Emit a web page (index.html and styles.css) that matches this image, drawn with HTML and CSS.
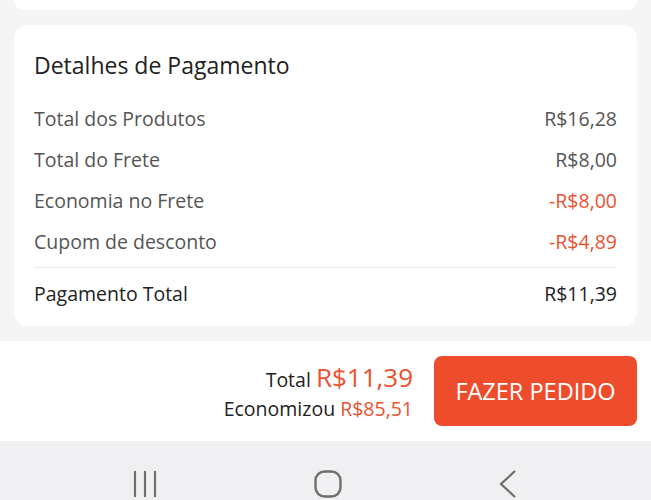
FILE: index.html
```html
<!DOCTYPE html>
<html lang="pt-BR">
<head>
    <meta charset="UTF-8">
    <meta name="viewport" content="width=device-width, initial-scale=1.0">
    <title>Detalhes de Pagamento</title>
    <link rel="stylesheet" href="styles.css">
</head>
<body>
    <div class="page">
        <div class="card card-top"></div>

        <div class="card detalhes">
            <h2>Detalhes de Pagamento</h2>
            <div class="linha"><span>Total dos Produtos</span><span>R$16,28</span></div>
            <div class="linha"><span>Total do Frete</span><span>R$8,00</span></div>
            <div class="linha"><span>Economia no Frete</span><span class="desconto">-R$8,00</span></div>
            <div class="linha"><span>Cupom de desconto</span><span class="desconto">-R$4,89</span></div>
            <div class="linha total"><span>Pagamento Total</span><span>R$11,39</span></div>
        </div>
    </div>

    <div class="rodape">
        <div class="resumo">
            <div class="resumo-total">Total <span class="valor">R$11,39</span></div>
            <div class="resumo-economia">Economizou <span class="laranja">R$85,51</span></div>
        </div>
        <button class="btn-pedido">FAZER PEDIDO</button>
    </div>

    <div class="navbar">
        <svg width="26" height="28" viewBox="0 0 26 28"><path d="M3 1v26M13 1v26M23 1v26" stroke="#6e6e6e" stroke-width="2.2" fill="none"/></svg>
        <svg width="28" height="28" viewBox="0 0 28 28"><rect x="1.5" y="1.5" width="25" height="25" rx="9" stroke="#6e6e6e" stroke-width="2.4" fill="none"/></svg>
        <svg width="20" height="28" viewBox="0 0 20 28"><path d="M17 1L3 14l14 13" stroke="#6e6e6e" stroke-width="2.2" fill="none"/></svg>
    </div>
</body>
</html>
```

FILE: styles.css
```css
body {
    margin: 0;
    font-family: "Open Sans", Roboto, sans-serif;
    background-color: #f5f5f5;
    width: 651px;
    height: 500px;
    overflow: hidden;
}
.page {
    padding: 0 14px 15px;
}
.card {
    background: white;
    border-radius: 14px;
}
.card-top {
    height: 10px;
    border-radius: 0 0 14px 14px;
    margin-bottom: 15px;
}
.detalhes {
    padding: 26px 20px 12px;
}
h2 {
    margin: 0 0 19px;
    font-size: 23px;
    font-weight: 400;
    color: #222;
    line-height: 28px;
}
.linha {
    display: flex;
    justify-content: space-between;
    font-size: 19.5px;
    color: #555;
    line-height: 23px;
    padding: 9px 0;
}
.desconto {
    color: #ea5230;
}
.linha.total {
    color: #222;
    border-top: 1px solid #e8e8e8;
    margin-top: 5px;
    padding-top: 14px;
}
.rodape {
    background: white;
    height: 100px;
    display: flex;
    justify-content: flex-end;
    align-items: center;
    padding: 0 14px;
    gap: 21px;
}
.resumo {
    text-align: right;
    color: #222;
    font-size: 19.5px;
}
.resumo-total {
    line-height: 32px;
}
.valor {
    color: #ea5230;
    font-size: 26px;
}
.laranja {
    color: #ea5230;
}
.resumo-economia {
    line-height: 26px;
}
.btn-pedido {
    width: 203px;
    height: 70px;
    background-color: #ee4d2d;
    color: white;
    border: none;
    border-radius: 8px;
    font-family: "Open Sans", Roboto, sans-serif;
    font-size: 23.5px;
}
.navbar {
    background: #f0f0f2;
    height: 59px;
    box-sizing: border-box;
    display: flex;
    justify-content: space-between;
    align-items: flex-start;
    padding: 29px 133px 0 132px;
}
```
